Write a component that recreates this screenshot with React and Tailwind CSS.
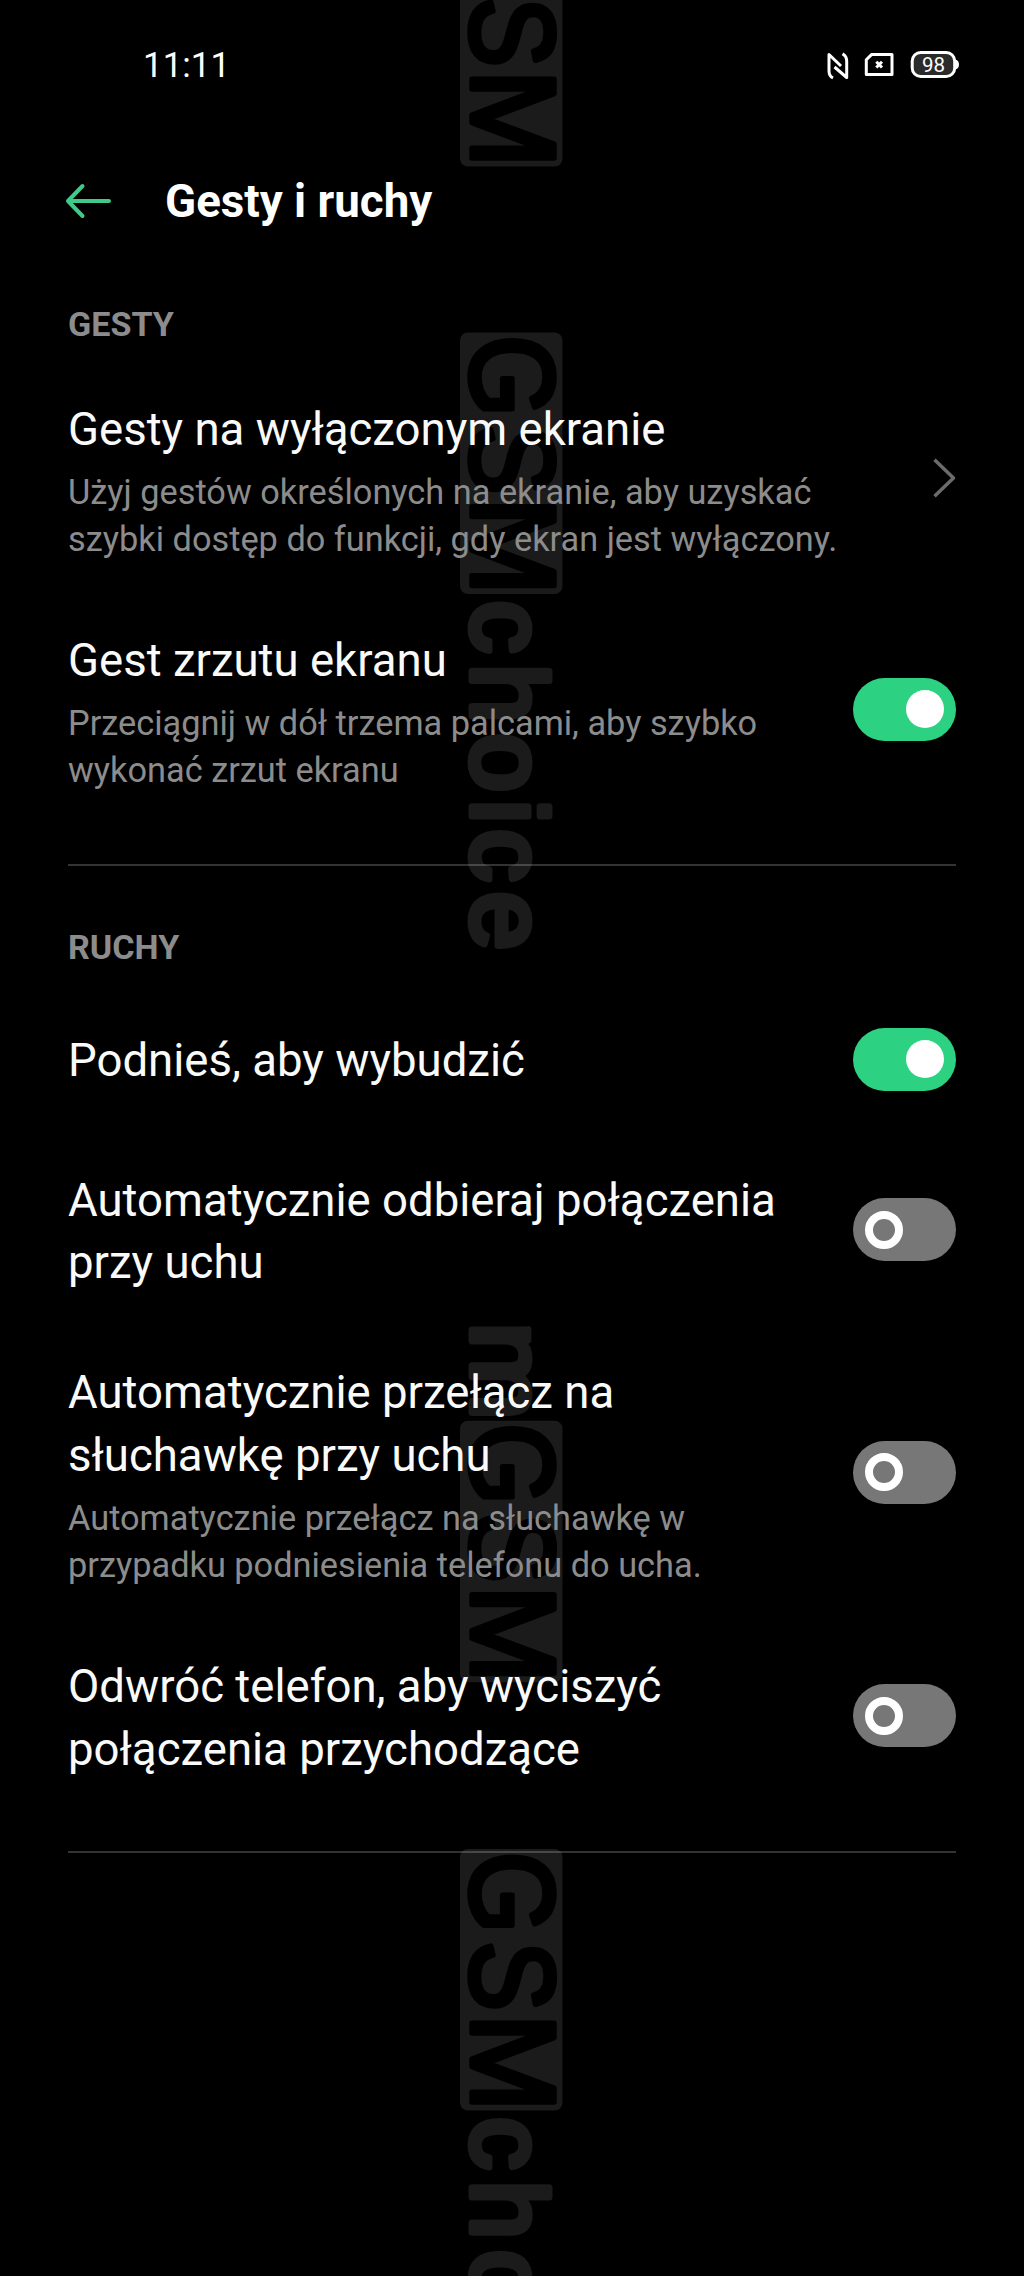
const INK = '#1b1b1b';
const glyphs = { fontFamily: '"Liberation Sans", Arial, sans-serif', strokeLinejoin: 'round' };
const upper = { ...glyphs, fontSize: 118, strokeWidth: 5.5, fill: '#000', stroke: '#000' };
const lower = { ...glyphs, fontSize: 105.5, strokeWidth: 7, fill: INK, stroke: INK };

function Mark({ y, m, word }) {
  return (
    <g transform={`translate(472 ${y}) rotate(90)`}>
      <rect x="0" y="-90.5" width="261.5" height="102.5" rx="8" fill={INK} />
      {m && <text {...lower} x="-88.6" y="0" transform="scale(1.11 1)">m</text>}
      <text {...upper} x="3 103.3" y="0.5" transform="scale(0.89 1)">GS</text>
      <text {...upper} x="164.4" y="0.5">M</text>
      {word && <text {...lower} x="268 331.5 400.7 467.3 496.5 559" y="0">choice</text>}
    </g>
  );
}

function Watermark() {
  return (
    <svg className="absolute inset-0" width="1024" height="2276" viewBox="0 0 1024 2276" aria-hidden="true">
      <Mark y={-95} />
      <Mark y={332.5} word />
      <Mark y={1420.7} m />
      <Mark y={1849} word />
    </svg>
  );
}

function StatusIcons() {
  return (
    <svg className="-mr-[4px]" width="140" height="30" viewBox="0 0 140 30" fill="none" stroke="#fff">
      <path strokeWidth="3" strokeLinejoin="round" d="M21 16L9 4.500V21Q9 26 13 28M14.500 17L26.700 27.500V11Q26.700 6 22.500 3.800" />
      <path strokeWidth="3" strokeLinejoin="round" d="M51.500 4.600H72V24.600H46.300V9.800Z" />
      <path strokeWidth="3" d="M56.300 11.800L62 17.500M62 11.800L56.300 17.500" />
      <rect x="92.200" y="2.500" width="42.500" height="24" rx="8.500" fill="#2b2b2b" strokeWidth="3" />
      <path fill="#fff" stroke="none" d="M135.500 9.500Q139 10.500 139 14.500T135.500 19.500Z" />
      <text x="113.500" y="21.500" textAnchor="middle" fill="#fff" stroke="none" fontSize="20.500" className="font-['Roboto',sans-serif]">98</text>
    </svg>
  );
}

function Toggle({ on }) {
  return (
    <span
      role="switch"
      aria-checked={!!on}
      className={
        on
          ? 'mb-[5.4px] flex h-[63px] w-[103px] shrink-0 items-center justify-end rounded-full bg-[#2cd282] px-[12px]'
          : 'mb-[5.4px] flex h-[63px] w-[103px] shrink-0 items-center rounded-full bg-[#777777] px-[12px]'
      }
    >
      <span className={on ? 'size-[38px] rounded-full bg-white' : 'size-[38px] rounded-full border-8 border-white'} />
    </span>
  );
}

function Chevron() {
  return (
    <svg className="mb-[5.4px] shrink-0" width="24" height="40" viewBox="0 0 24 40" fill="none" stroke="#6b6b6b" strokeWidth="3.500" strokeLinejoin="round">
      <path d="M2.500 1.800L21.500 20L2.500 38.200" />
    </svg>
  );
}

function Row({ title, sub, control, className }) {
  return (
    <div className={'flex items-center justify-between ' + className}>
      <div>
        {title.map((t) => (
          <div key={t} className="text-[45.55px] leading-[62.6px] whitespace-nowrap text-[#fafafa]">{t}</div>
        ))}
        {sub && (
          <div className="mt-[7.6px]">
            {sub.map((t) => (
              <div key={t} className="text-[34.35px] leading-[46.5px] whitespace-nowrap text-[#8c8c8c]">{t}</div>
            ))}
          </div>
        )}
      </div>
      {control}
    </div>
  );
}

function SectionTitle({ children, className }) {
  return <h2 className={'text-[34.1px] leading-[46px] font-bold text-[#8c8c8c] ' + className}>{children}</h2>;
}

export default function App() {
  return (
    <div className="relative h-[2276px] w-[1024px] overflow-hidden bg-black font-['Roboto',sans-serif]">
      <Watermark />
      <div className="relative flex flex-col px-[68px]">
        <div className="flex h-[130px] items-center justify-between pl-[75px]">
          <span className="pt-[1px] text-[35px] leading-[40px] text-white">11:11</span>
          <StatusIcons />
        </div>
        <header className="flex h-[142px] items-center">
          <svg width="50" height="40" viewBox="0 0 50 40" fill="none" stroke="#3fc98a" strokeWidth="4" strokeLinecap="round" strokeLinejoin="round" className="-ml-[4px]">
            <path d="M18.500 5L4 20L18.500 35M4 20H45" />
          </svg>
          <h1 className="ml-[51px] pt-[2px] text-[45.7px] font-bold text-white">Gesty i ruchy</h1>
        </header>
        <SectionTitle className="mt-[29px]">GESTY</SectionTitle>
        <Row
          className="mt-[52px]"
          title={['Gesty na wyłączonym ekranie']}
          sub={['Użyj gestów określonych na ekranie, aby uzyskać', 'szybki dostęp do funkcji, gdy ekran jest wyłączony.']}
          control={<Chevron />}
        />
        <Row
          className="mt-[68px]"
          title={['Gest zrzutu ekranu']}
          sub={['Przeciągnij w dół trzema palcami, aby szybko', 'wykonać zrzut ekranu']}
          control={<Toggle on />}
        />
        <div className="mt-[70.6px] h-[2px] bg-white/20" />
        <SectionTitle className="mt-[58px]">RUCHY</SectionTitle>
        <Row className="mt-[57.6px]" title={['Podnieś, aby wybudzić']} control={<Toggle on />} />
        <Row className="mt-[73.9px]" title={['Automatycznie odbieraj połączenia', 'przy uchu']} control={<Toggle />} />
        <Row
          className="mt-[67.2px]"
          title={['Automatycznie przełącz na', 'słuchawkę przy uchu']}
          sub={['Automatycznie przełącz na słuchawkę w', 'przypadku podniesienia telefonu do ucha.']}
          control={<Toggle />}
        />
        <Row className="mt-[68px]" title={['Odwróć telefon, aby wyciszyć', 'połączenia przychodzące']} control={<Toggle />} />
        <div className="mt-[69.6px] h-[2px] bg-white/20" />
      </div>
    </div>
  );
}
